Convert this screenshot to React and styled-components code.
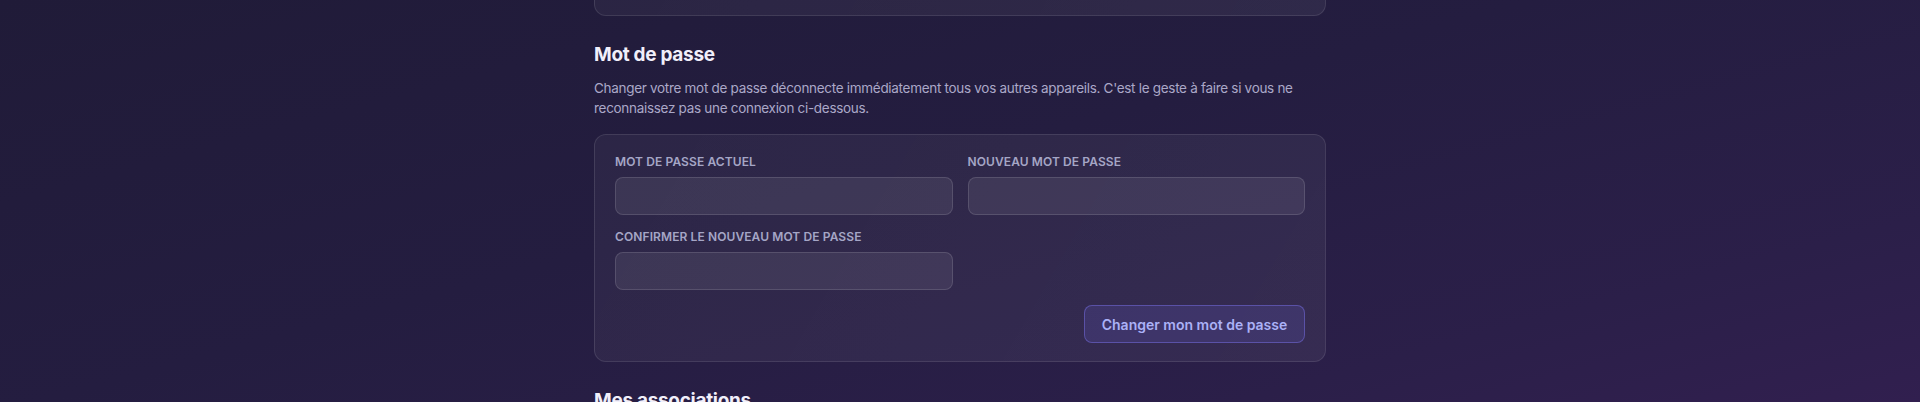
import React from 'react';
import styled, { createGlobalStyle } from 'styled-components';

const GlobalStyle = createGlobalStyle`
  html, body {
    margin: 0;
    padding: 0;
    height: 402px;
    overflow: hidden;
  }
  body {
    font-family: Inter, "Noto Sans", sans-serif;
    background: linear-gradient(165deg, #201b38 0%, #241d40 45%, #2b1f49 80%, #311f4f 100%);
    color: #eeecf8;
  }
`;

const Page = styled.main`
  width: 732px;
  margin: 0 auto;
`;

const Card = styled.div`
  box-sizing: border-box;
  background: linear-gradient(120deg, rgba(255, 255, 255, 0.045), rgba(255, 255, 255, 0.06));
  border: 1px solid rgba(255, 255, 255, 0.1);
  border-radius: 12px;
  padding: 19px 20px 18px;
`;

const PrevCard = styled(Card)`
  height: 60px;
  margin-top: -44px;
`;

const Section = styled.section`
  margin-top: 25px;
`;

const Heading = styled.h2`
  margin: 0;
  font-size: 19px;
  line-height: 28px;
  font-weight: 700;
  letter-spacing: -0.3px;
  color: #f1effa;
`;

const Description = styled.p`
  margin: 10px 0 16px;
  font-size: 13.5px;
  line-height: 19.5px;
  color: #aba8c8;
  letter-spacing: -0.3px;
`;

const FieldGrid = styled.div`
  display: grid;
  grid-template-columns: 1fr 1fr;
  column-gap: 15px;
  row-gap: 14px;
`;

const Field = styled.label`
  display: flex;
  flex-direction: column;
  gap: 7px;
`;

const Label = styled.span`
  font-size: 12px;
  line-height: 16px;
  font-weight: 600;
  text-transform: uppercase;
  color: #a5a6c6;
  letter-spacing: 0.1px;
`;

const Input = styled.input`
  box-sizing: border-box;
  height: 38px;
  width: 100%;
  border-radius: 8px;
  border: 1px solid rgba(255, 255, 255, 0.13);
  background: rgba(255, 255, 255, 0.075);
  color: #eeecf8;
  font: inherit;
  padding: 0 12px;
  outline: none;
`;

const Actions = styled.div`
  display: flex;
  justify-content: flex-end;
  margin-top: 15px;
`;

const Button = styled.button`
  box-sizing: border-box;
  height: 38px;
  padding: 0 16px;
  min-width: 221px;
  border-radius: 8px;
  border: 1px solid rgba(120, 112, 230, 0.5);
  background: rgba(90, 84, 180, 0.25);
  color: #abb1f7;
  font-family: inherit;
  font-size: 14px;
  font-weight: 600;
  cursor: pointer;
`;

const fields = [
  { id: 'current', label: 'Mot de passe actuel' },
  { id: 'next', label: 'Nouveau mot de passe' },
  { id: 'confirm', label: 'Confirmer le nouveau mot de passe' },
];

export default function App() {
  return (
    <>
      <GlobalStyle />
      <Page>
        <PrevCard />
        <Section>
          <Heading>Mot de passe</Heading>
          <Description>
            Changer votre mot de passe déconnecte immédiatement tous vos autres appareils. C'est le geste à faire si vous ne
            reconnaissez pas une connexion ci-dessous.
          </Description>
          <Card>
            <FieldGrid>
              {fields.map((f) => (
                <Field key={f.id}>
                  <Label>{f.label}</Label>
                  <Input type="password" />
                </Field>
              ))}
            </FieldGrid>
            <Actions>
              <Button>Changer mon mot de passe</Button>
            </Actions>
          </Card>
        </Section>
        <Section>
          <Heading>Mes associations</Heading>
        </Section>
      </Page>
    </>
  );
}
